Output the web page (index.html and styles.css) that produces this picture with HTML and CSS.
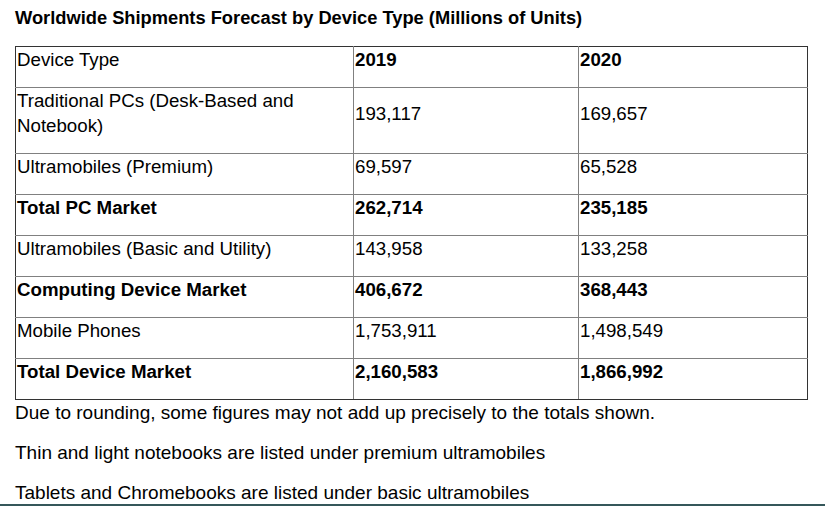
FILE: index.html
```html
<!DOCTYPE html>
<html>
<head>
<meta charset="utf-8">
<link rel="stylesheet" href="styles.css">
</head>
<body>
<h3 class="title">Worldwide Shipments Forecast by Device Type (Millions of Units)</h3>
<table class="data">
  <colgroup><col class="c1"><col class="c2"><col class="c3"></colgroup>
  <tr><td>Device Type</td><td class="b">2019</td><td class="b">2020</td></tr>
  <tr><td>Traditional PCs (Desk-Based and Notebook)</td><td class="mid">193,117</td><td class="mid">169,657</td></tr>
  <tr><td>Ultramobiles (Premium)</td><td>69,597</td><td>65,528</td></tr>
  <tr class="b"><td>Total PC Market</td><td>262,714</td><td>235,185</td></tr>
  <tr><td>Ultramobiles (Basic and Utility)</td><td>143,958</td><td>133,258</td></tr>
  <tr class="b"><td>Computing Device Market</td><td>406,672</td><td>368,443</td></tr>
  <tr><td>Mobile Phones</td><td>1,753,911</td><td>1,498,549</td></tr>
  <tr class="b"><td>Total Device Market</td><td>2,160,583</td><td>1,866,992</td></tr>
</table>
<p class="note">Due to rounding, some figures may not add up precisely to the totals shown.</p>
<p class="note">Thin and light notebooks are listed under premium ultramobiles</p>
<p class="note">Tablets and Chromebooks are listed under basic ultramobiles</p>
<div class="edge"></div>
</body>
</html>
```
FILE: styles.css
```css
html, body { margin: 0; padding: 0; background: #fff; }
body {
  padding: 0 15px;
  font-family: "Liberation Sans", Arial, sans-serif;
  font-size: 18.7px;
  line-height: 25px;
  color: #000;
  overflow: hidden;
}
.title {
  margin: 5px 0 16px;
  font-size: 18.3px;
  line-height: 25px;
  font-weight: bold;
}
.data {
  border-collapse: collapse;
  border: 1px solid #333;
  width: 792px;
  table-layout: fixed;
}
.c1 { width: 338px; }
.c2 { width: 225px; }
.c3 { width: 229px; }
.data td {
  border: 1px solid #808080;
  padding: 0 0 15px 1px;
  vertical-align: top;
}
.data tr:first-child td { border-top-color: #333; }
.data tr:last-child td { border-bottom-color: #333; }
.data td:first-child { border-left-color: #333; }
.data td:last-child { border-right-color: #333; }
.data td.mid { vertical-align: middle; }
.b, .b td { font-weight: bold; }
.note { margin: 0 0 15px; font-size: 19px; }
.edge {
  position: fixed;
  left: 0; right: 0; bottom: 0;
  height: 2px;
  background: #35575a;
}
```
